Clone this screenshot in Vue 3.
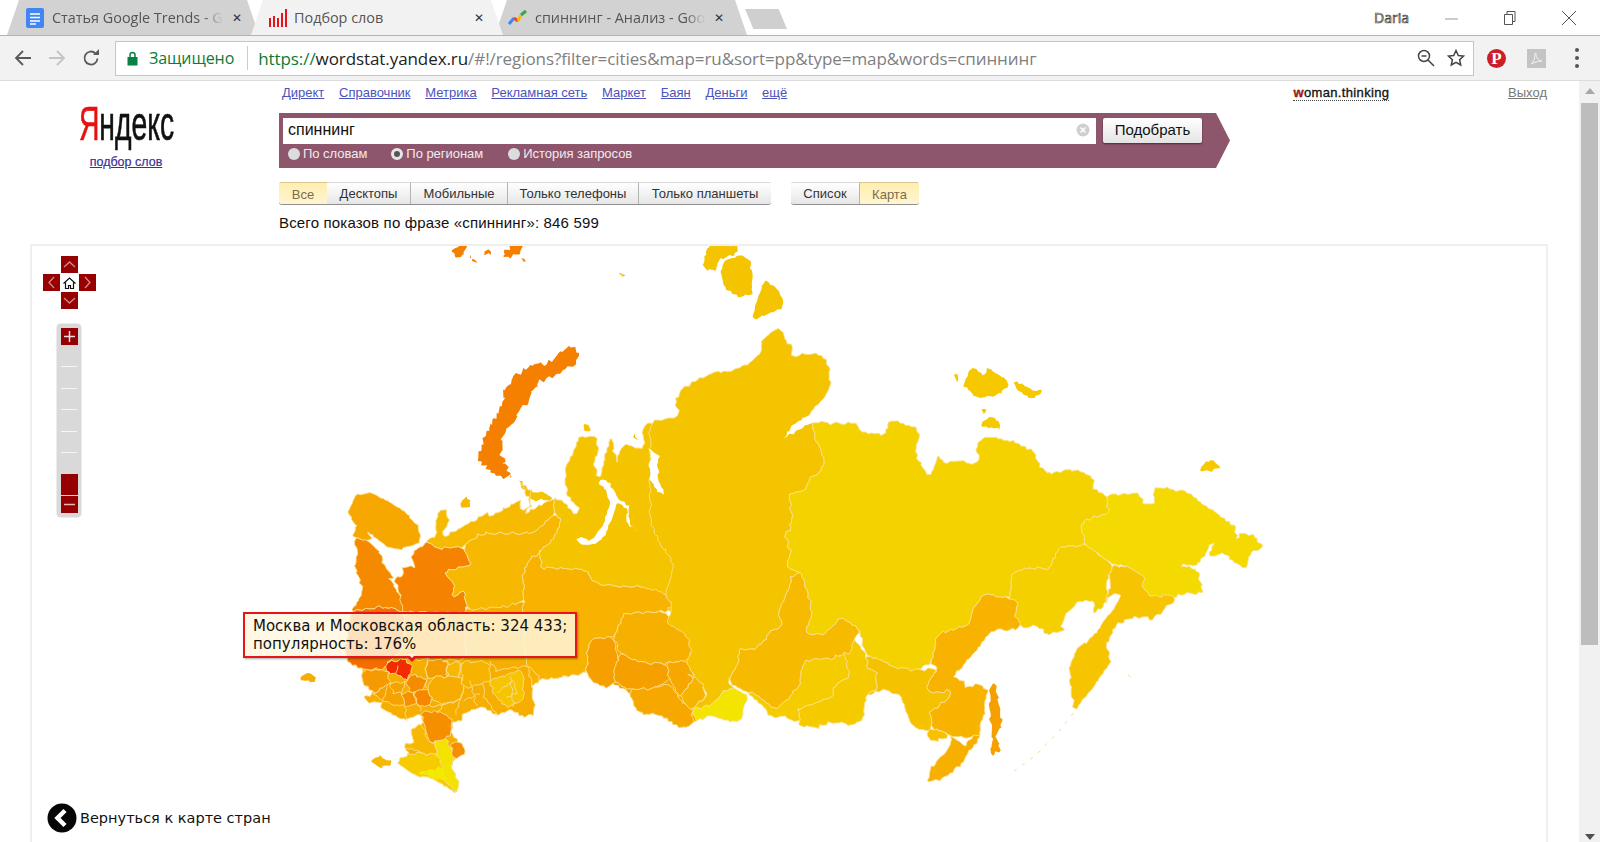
<script setup>
// frames: crop origin + scale, so outlines can be traced in crop coordinates
const frames = {
  eu: [230, 480, 1 / 3, 1 / 3],
  north: [420, 240, 1 / 3, 1 / 3],
  east: [650, 320, 1 / 2.41, 1 / 3],
}

const parse = (f, s) => {
  const [ox, oy, kx, ky] = frames[f]
  return s.trim().split(/\s+/).map((p) => {
    const [x, y] = p.split(',').map(Number)
    return [ox + x * kx, oy + y * ky]
  })
}

// take the sharp corners off, only a little so neighbours keep touching
const soften = (list, t = 0.12) => {
  const out = []
  list.forEach((a, i) => {
    const b = list[(i + 1) % list.length]
    out.push([a[0] * (1 - t) + b[0] * t, a[1] * (1 - t) + b[1] * t])
    out.push([a[0] * t + b[0] * (1 - t), a[1] * t + b[1] * (1 - t)])
  })
  return out
}

// the warp depends only on position, so neighbours wobble together
const warp = ([x, y], amp) => [
  x + amp * (Math.sin(0.9 * x + 0.4 * y) + 0.6 * Math.sin(0.31 * x - 0.83 * y) + 0.4 * Math.sin(1.9 * y + 0.7 * x)),
  y + amp * (Math.sin(0.7 * y - 0.5 * x + 1) + 0.6 * Math.sin(0.37 * y + 0.91 * x) + 0.4 * Math.sin(1.7 * x - 0.6 * y)),
]

const rough = (list, amp, closed = true) => {
  const out = []
  const last = closed ? list.length : list.length - 1
  for (let i = 0; i < last; i++) {
    const a = list[i]
    const b = list[(i + 1) % list.length]
    const n = Math.max(1, Math.round(Math.hypot(b[0] - a[0], b[1] - a[1]) / 3))
    for (let k = 0; k < n; k++) {
      out.push(warp([a[0] + ((b[0] - a[0]) * k) / n, a[1] + ((b[1] - a[1]) * k) / n], amp))
    }
  }
  if (!closed) out.push(warp(list[list.length - 1], amp))
  return out.map((p) => p[0].toFixed(1) + ',' + p[1].toFixed(1)).join(' ')
}

const raw = [
  // arctic islands
  ['north', '#f58000', '95,30 110,25 118,15 145,15 135,32 125,50 108,48', 0],
  ['north', '#f58000', '190,38 205,25 215,42 192,45', 0],
  ['north', '#f58000', '250,32 270,28 272,15 305,15 300,38 272,52 252,52', 0],
  ['north', '#f58000', '302,55 315,52 318,62 306,66', 0],
  ['north', '#f58000', '150,42 156,48 150,54', 0],
  ['north', '#f58000', '155,60 170,58 172,68 155,68', 0],
  ['north', '#f58000', '172,640 182,622 188,598 203,568 215,540 232,518 244,488 250,452 266,428 288,406 315,388 340,372 378,372 400,355 420,340 445,316 464,318 474,345 460,376 424,396 392,410 358,430 335,450 320,492 290,526 262,568 246,602 243,640 258,680 280,708 235,714 205,694 178,662', 0, 1.7],
  ['north', '#f7b800', '595,97 603,98 616,107 605,106', 0],
  ['north', '#f5c400', '865,15 950,15 955,40 905,55 893,75 890,92 855,90 850,55', 0],
  ['north', '#f5c400', '905,68 960,45 990,58 1000,120 992,165 950,170 918,148 905,120', 0],
  ['north', '#f5c400', '1040,120 1052,135 1068,145 1088,178 1085,205 1040,225 995,240 1015,180 1025,130', 0],
  ['north', '#f5c400', '490,575 495,555 510,558 512,572', 0],
  ['north', '#f5c400', '640,595 646,580 652,598', 0],
  ['north', '#f5c400', '296,720 305,722 325,750 325,757 305,745', 0],
  ['north', '#f5c400', '325,752 372,758 400,780 330,780', 0],
  // west siberian mass, bays are cut later
  ['eu', '#f5c400', '970,55 1000,60 1035,108 1045,85 1010,40 1005,-30 1030,-80 1050,-130 1100,-130 1105,-95 1090,-55 1105,0 1125,-60 1140,-130 1150,-110 1148,-85 1165,-55 1165,-75 1185,-105 1200,-100 1240,-95 1240,-170 1500,-200 1500,400 1300,395 1240,320 1170,320 1090,310 1070,270 1000,265 935,265 930,215 975,170 995,125 975,100', 1],
  // european russia base
  ['eu', '#f6ae00', '360,395 345,510 355,545 400,570 395,600 430,640 405,650 415,670 455,665 455,690 530,720 575,700 575,730 545,750 550,785 520,800 540,820 500,845 540,880 620,900 680,938 690,915 660,855 680,830 705,820 690,785 660,760 672,720 695,725 700,700 760,680 800,705 840,690 880,710 915,700 905,620 930,600 1070,580 1075,480 1150,470 1180,400 880,365 710,390', 1],
  // underlay for the south urals so no gaps show through
  ['eu', '#f6a800', '1075,480 1150,470 1180,400 1300,395 1375,460 1390,510 1420,600 1425,650 1390,730 1355,745 1295,705 1225,700 1195,630 1150,610 1125,625 1085,605 1070,580', 0],
  ['eu', '#f7b300', '880,365 880,290 890,245 930,215 935,265 1000,265 1070,270 1090,310 1170,320 1240,320 1310,345 1330,380 1300,395 1180,400 1150,470 1075,480 1070,580 930,600 905,620 880,500', 1],
  ['eu', '#f6a700', '355,100 365,65 385,42 430,40 480,65 530,100 565,140 570,175 555,195 500,210 465,195 430,165 415,155 428,182 370,175 380,140', 1],
  ['eu', '#f58a00', '370,175 415,180 450,215 465,260 490,290 480,300 510,345 520,395 460,380 360,395 400,340 375,265 385,220', 1],
  ['eu', '#f58200', '490,295 515,290 520,260 555,262 540,225 590,185 625,205 700,200 725,255 640,275 670,310 670,350 705,330 710,390 700,400 520,400 510,340', 1],
  ['eu', '#f6b800', '700,200 750,160 910,160 975,100 995,125 975,170 930,215 890,245 880,290 880,365 825,380 710,390 705,330 670,350 670,310 640,275 725,255', 1],
  ['eu', '#f6ba00', '625,95 645,90 660,130 635,155 640,170 690,145 770,100 780,110 870,60 875,95 905,75 870,5 905,40 900,75 885,100 970,55 975,100 910,160 750,160 700,200 625,205 590,185 615,165', 1],
  ['eu', '#f6b800', '690,70 705,50 720,60 715,80 695,85', 0],
  // urals & south siberia
  ['eu', '#f6b000', '1180,400 1300,395 1375,460 1390,510 1370,540 1310,550 1240,550 1170,520 1150,470', 1],
  ['eu', '#f69f00', '1075,480 1150,470 1165,540 1150,610 1125,625 1085,605 1070,580', 1],
  ['eu', '#f6a000', '1170,520 1240,550 1310,550 1320,600 1270,625 1195,630 1150,600 1160,550', 1],
  ['eu', '#f6a800', '1310,550 1370,540 1390,590 1350,655 1320,600', 1],
  ['eu', '#f6a800', '1195,630 1270,625 1320,610 1350,660 1385,685 1390,730 1355,745 1295,705 1225,700', 1],
  ['eu', '#f6b400', '1370,580 1420,600 1425,650 1385,690 1350,655 1390,590', 1],
  // central regions, the first two sit behind the tooltip
  ['eu', '#f56d00', '360,395 460,380 520,395 520,510 470,565 400,570 355,545 345,510', 1],
  ['eu', '#f59e00', '520,395 700,400 710,540 590,540 525,535 470,550 520,510', 1],
  ['eu', '#f59a00', '400,570 470,570 480,610 430,640 395,600', 1],
  ['eu', '#f59c00', '590,540 650,540 655,590 610,590 590,600', 1],
  ['eu', '#f6b800', '650,555 690,545 690,590 650,590', 1],
  ['eu', '#f6ac00', '655,590 690,590 700,625 690,660 640,670 605,660 590,625 610,590', 1],
  ['eu', '#f6b400', '690,545 780,545 780,600 760,610 700,625', 1],
  ['eu', '#f6c400', '780,600 880,570 880,660 830,680 790,640', 1],
  ['eu', '#f58c00', '530,605 550,580 590,600 580,630 540,635', 1],
  ['eu', '#f59000', '515,640 550,635 560,670 525,680', 1],
  ['eu', '#f58800', '555,635 590,625 605,660 590,680 560,670', 1],
  ['eu', '#f6a200', '480,610 530,605 515,640 525,680 455,665 430,640', 1],
  ['eu', '#f58f00', '575,695 640,695 670,720 660,760 640,785 600,790 585,740', 1],
  ['eu', '#f6b800', '545,750 575,730 600,790 615,780 620,825 575,820 520,800 550,785', 1],
  ['eu', '#f58f00', '660,790 695,785 705,820 680,835 668,825', 1],
  ['eu', '#f6cc00', '500,845 540,820 575,820 620,825 645,850 660,855 690,915 680,938 620,900 540,880', 1],
  ['eu', '#f4e200', '615,785 650,775 672,830 660,855 690,915 680,938 645,905 640,860 620,825', 1],
  ['eu', '#f4ea00', '560,880 600,868 640,860 650,905 620,895', 0],
  ['eu', '#f6b800', '425,840 450,825 470,840 490,845 465,860 445,862', 0],
  ['eu', '#f6ae00', '208,592 235,580 255,590 255,605 210,602', 0],
  ['eu', '#f22c00', '470,550 525,535 550,565 530,605 500,585 470,575', 1],
  // east
  ['east', '#f5c400', '0,305 40,298 72,285 60,240 75,210 110,180 160,155 190,155 240,130 265,100 270,60 305,25 325,40 325,65 345,85 340,112 370,100 410,105 430,135 435,200 415,240 380,285 395,305 395,350 415,400 420,440 385,480 375,510 335,525 342,580 340,630 325,640 340,700 330,745 365,755 340,770 335,800 310,880 320,920 290,935 255,990 215,985 215,1025 190,1085 205,1105 175,1115 150,1155 100,1170 135,1130 130,1100 90,1040 100,990 85,940 40,905 55,860 35,825 55,760 55,730 20,660 0,600', 1],
  ['east', '#f4d200', '395,305 440,310 500,310 505,335 565,345 575,300 640,320 650,350 640,400 665,460 680,465 695,405 710,430 745,420 775,435 795,420 785,375 810,350 860,360 925,390 930,420 960,460 1020,448 1065,470 1070,510 1100,525 1105,580 1045,600 1040,630 1050,675 990,680 965,745 905,745 875,760 865,835 805,822 775,870 770,915 695,940 675,1030 640,1050 600,1045 520,1005 505,930 460,890 420,945 378,940 390,870 365,755 330,745 340,700 325,640 340,630 342,580 335,525 375,510 385,480 420,440 415,400 395,350', 1],
  ['east', '#f4da00', '1100,525 1175,520 1190,550 1215,555 1215,500 1290,515 1340,560 1410,620 1415,660 1425,640 1455,645 1480,680 1445,700 1440,745 1400,720 1390,700 1345,710 1360,670 1350,670 1340,700 1320,735 1275,735 1320,750 1335,820 1300,820 1260,830 1205,830 1185,800 1195,775 1165,745 1115,730 1050,675 1040,630 1045,600 1105,580', 1],
  ['east', '#f5c800', '1325,455 1335,430 1355,420 1375,440 1360,452', 0],
  ['east', '#f5c800', '755,190 770,145 785,150 805,170 815,145 860,175 865,200 835,225 785,235', 0],
  ['east', '#f5c800', '880,185 920,210 945,212 935,230 910,235 880,205', 0],
  ['east', '#f5c800', '800,270 808,265 805,285', 0],
  ['east', '#f5c800', '795,315 820,290 840,305 842,330', 0],
  ['east', '#f5c800', '735,165 741,165 738,192', 0],
  ['east', '#f5d000', '875,760 905,745 965,745 990,680 1050,675 1115,735 1100,800 1100,850 1070,880 1070,840 1030,845 1005,880 990,925 1000,930 950,945 950,925 920,918 895,925 880,885 885,840 865,835', 1],
  ['east', '#f6c400', '1115,735 1165,745 1195,775 1185,800 1205,830 1260,825 1265,840 1205,905 1200,890 1155,895 1125,915 1100,975 1110,1025 1090,1065 1050,1130 1022,1175 1010,1050 1030,985 1060,960 1110,880 1135,820 1110,825 1100,850', 1],
  ['east', '#f7b300', '695,940 770,915 775,870 805,822 865,835 885,840 880,885 895,915 880,930 825,930 780,1000 730,1070 760,1085 760,1105 795,1090 815,1110 805,1170 795,1245 775,1250 760,1255 725,1245 680,1225 675,1175 715,1140 725,1110 680,1120 665,1100 695,1045 675,1030', 1],
  ['east', '#f7b000', '725,1245 720,1280 690,1330 675,1340 670,1385 700,1380 740,1345 780,1280 795,1245 775,1250 760,1280', 1],
  ['east', '#f7c000', '668,1230 680,1225 722,1245 695,1262 672,1262', 1],
  ['east', '#f5c200', '520,1005 600,1045 640,1050 695,1045 665,1100 680,1120 725,1110 715,1140 675,1175 680,1225 668,1235 630,1215 605,1125 565,1108 525,1125 545,1105 545,1055 525,1040', 1],
  ['east', '#f5cb00', '490,960 510,985 520,1005 525,1040 545,1055 545,1105 525,1125 510,1200 490,1215 435,1205 400,1225 360,1215 360,1165 440,1130 440,1100 480,1070 462,1000', 1],
  ['east', '#f5cc00', '235,1120 250,1115 305,1170 360,1100 370,1020 440,1015 470,1000 480,1070 440,1100 440,1130 360,1165 360,1205 320,1190 285,1190 280,1165', 1],
  ['east', '#f6ba00', '340,770 365,755 390,870 378,940 420,945 460,890 505,930 490,960 480,1000 465,1000 440,1015 370,1020 360,1100 305,1170 250,1115 235,1120 190,1085 215,1025 215,985 255,990 290,935 320,920 310,880 335,800', 1],
  ['east', '#f4e500', '100,1170 150,1155 175,1115 205,1105 235,1125 220,1205 175,1200 150,1185 110,1205', 1],
  ['east', '#f5a000', '830,1085 835,1110 850,1220 835,1245 845,1295 822,1305 825,1250 818,1160 820,1110', 0],
  ['east', '#f6c860', '1150,1058 1160,1072 1155,1072', 0],
]

// white bays and gulfs over the land
const bays = [
  ['eu', '1105,0 1140,55 1125,130 1085,180 1040,172 1042,188 1085,196 1125,170 1150,110 1160,65 1195,90 1190,130 1226,158 1195,125 1198,85 1165,52 1130,0'],
  ['north', '695,640 718,650 705,720 735,762 725,765 695,725 690,690'],
  ['east', '0,380 18,415 22,490 36,522 22,512 5,490 0,470'],
  ['east', '320,355 355,330 395,305 425,295 425,270 410,250 405,280 380,285 340,320'],
  ['east', '415,250 430,248 432,272 412,275'],
]

// inner borders of the small central regions
const borders = [
  '590,540 590,625', '650,540 655,590', '690,545 690,590', '760,610 765,650 800,705',
  '700,625 680,700', '640,670 620,700', '560,670 575,695', '455,665 470,620',
  '480,610 490,640 515,640', '525,680 530,720', '720,600 740,680', '840,590 850,680',
  '600,680 660,670 690,660', '750,640 700,660', '800,640 850,600 860,640 830,650',
  '500,585 505,560', '780,545 800,570 880,560', '930,600 905,560 880,560',
]

const land = raw.map(([f, fill, s, line, amp]) => ({
  fill,
  points: rough(soften(parse(f, s)), amp || 0.9),
  line: !!line,
}))
const gulfs = bays.map(([f, s]) => rough(soften(parse(f, s)), 0.9))
const seams = borders.map((s) => rough(parse('eu', s), 0.9, false))
const kurils = rough(parse('east', '1020,1180 985,1235 930,1305 870,1360'), 0, false)

const services = ['Директ', 'Справочник', 'Метрика', 'Рекламная сеть', 'Маркет', 'Баян', 'Деньги', 'ещё']
const devices = [
  { name: 'Все', width: 48, on: true },
  { name: 'Десктопы', width: 84 },
  { name: 'Мобильные', width: 97 },
  { name: 'Только телефоны', width: 131 },
  { name: 'Только планшеты', width: 132 },
]
const ticks = [0, 1, 2, 3, 4]
</script>

<template>
  <div class="screen">
    <header class="chrome">
      <div class="tabstrip">
        <div class="tab tab--first">
          <svg class="fav" width="20" height="20" viewBox="0 0 20 20">
            <rect x="1" y="0" width="18" height="20" rx="2" fill="#4285f4" />
            <path d="M5 6h10M5 9.500h10M5 13h10M5 16h6" stroke="#fff" stroke-width="1.600" />
          </svg>
          <span class="tab__title tab__title--fade">Статья Google Trends - G</span>
          <span class="tab__x">✕</span>
        </div>
        <div class="tab tab--on">
          <svg class="fav" width="20" height="18" viewBox="0 0 20 18">
            <path d="M2 9h2v9H2zM6 7h2v11H6zM10 9h2v9h-2zM14 4h2v14h-2zM18 0h2v18h-2z" fill="#e8141c" />
          </svg>
          <span class="tab__title">Подбор слов</span>
          <span class="tab__x">✕</span>
        </div>
        <div class="tab tab--third">
          <svg class="fav" width="20" height="18" viewBox="0 0 20 18">
            <path d="M1 15l5-6" stroke="#4285f4" stroke-width="3" />
            <path d="M6 9l4 3" stroke="#ea4335" stroke-width="3" />
            <path d="M10 12l3-6" stroke="#fbbc05" stroke-width="3" />
            <path d="M13 6l5-4" stroke="#34a853" stroke-width="3" />
          </svg>
          <span class="tab__title tab__title--fade">спиннинг - Анализ - Goo</span>
          <span class="tab__x">✕</span>
        </div>
        <div class="newtab"></div>
        <div class="winbox">
          <span class="winbox__user">Daria</span>
          <svg width="14" height="14" viewBox="0 0 14 14" class="winbox__btn"><path d="M0 8h13" stroke="#9a9a9a" /></svg>
          <svg width="14" height="16" viewBox="0 0 14 16" class="winbox__btn"><path d="M1.500 4.500h8v10h-8zM4 4.500v-3h8v10h-2.500" fill="none" stroke="#555" /></svg>
          <svg width="16" height="16" viewBox="0 0 16 16" class="winbox__btn"><path d="M1 1l14 14M15 1L1 15" stroke="#555" /></svg>
        </div>
      </div>
      <div class="toolbar">
        <svg width="18" height="18" viewBox="0 0 18 18" class="nav"><path d="M17 9H2M9 2L2 9l7 7" fill="none" stroke="#5a5a5a" stroke-width="1.800" /></svg>
        <svg width="18" height="18" viewBox="0 0 18 18" class="nav"><path d="M1 9h15M9 2l7 7-7 7" fill="none" stroke="#c4c4c4" stroke-width="1.800" /></svg>
        <svg width="18" height="18" viewBox="0 0 18 18" class="nav"><path d="M15.500 9.500A6.500 6.500 0 1 1 13.500 4.300" fill="none" stroke="#5a5a5a" stroke-width="1.800" /><path d="M11 6h6V0z" fill="#5a5a5a" /></svg>
        <div class="omnibox">
          <svg width="11" height="15" viewBox="0 0 11 15"><path d="M3 6V4a2.500 2.500 0 0 1 5 0v2" fill="none" stroke="#0b8043" stroke-width="1.500" /><rect x="0.500" y="6" width="10" height="8.500" fill="#0b8043" /></svg>
          <span class="omnibox__secure">Защищено</span>
          <span class="omnibox__sep"></span>
          <span class="omnibox__url"><span class="u-green">https://</span><span class="u-host">wordstat.yandex.ru</span>/#!/regions?filter=cities&amp;map=ru&amp;sort=pp&amp;type=map&amp;words=спиннинг</span>
          <svg width="18" height="18" viewBox="0 0 18 18" class="omnibox__zoom"><circle cx="7" cy="7" r="5.500" fill="none" stroke="#444" stroke-width="1.500" /><path d="M4.500 7h5M11 11l6 6" stroke="#444" stroke-width="1.500" /></svg>
          <svg width="18" height="18" viewBox="0 0 18 18"><path d="M9 1.500l2.300 5 5.200.6-3.900 3.600 1.100 5.300L9 13.300 4.300 16l1.100-5.300L1.500 7.100l5.200-.6z" fill="none" stroke="#444" stroke-width="1.500" /></svg>
        </div>
        <div class="pin">P</div>
        <div class="pdf">
          <svg width="13" height="13" viewBox="0 0 13 13"><path d="M1 12c3-2 4-6 4-10 0-2 1-1 1 0 0 4 3 7 6 7-3 0-7 1-11 3z" fill="none" stroke="#f2f2f2" /></svg>
        </div>
        <div class="dots"><i></i><i></i><i></i></div>
      </div>
    </header>

    <div class="viewport">
      <main class="page">
        <div class="top">
          <div class="brand">
            <div class="brand__logo"><span class="brand__ya">Я</span>ндекс</div>
            <a class="brand__sub">подбор слов</a>
          </div>
          <div class="panel">
            <nav class="services">
              <a v-for="s in services" :key="s" class="services__link">{{ s }}</a>
              <a class="user"><b class="user__w">w</b>oman.thinking</a>
              <a class="logout">Выход</a>
            </nav>
            <div class="search">
              <div class="search__row">
                <div class="search__input">
                  <span>спиннинг</span>
                  <svg width="14" height="14" viewBox="0 0 14 14"><circle cx="7" cy="7" r="6.500" fill="#cfcfcf" /><path d="M4.500 4.500l5 5M9.500 4.500l-5 5" stroke="#fff" stroke-width="1.600" /></svg>
                </div>
                <button class="search__btn">Подобрать</button>
              </div>
              <div class="search__modes">
                <label class="mode mode--a"><i class="radio"></i>По словам</label>
                <label class="mode mode--b"><i class="radio radio--on"></i>По регионам</label>
                <label class="mode"><i class="radio"></i>История запросов</label>
              </div>
            </div>
            <div class="filters">
              <div class="seg">
                <span v-for="d in devices" :key="d.name" class="seg__item" :class="{ 'seg__item--on': d.on }" :style="{ width: d.width + 'px' }">{{ d.name }}</span>
              </div>
              <div class="seg">
                <span class="seg__item seg__item--list">Список</span>
                <span class="seg__item seg__item--on seg__item--card">Карта</span>
              </div>
            </div>
            <p class="total">Всего показов по фразе «спиннинг»: 846 599</p>
          </div>
        </div>

        <section class="map">
          <svg class="map__svg" width="1518" height="598" viewBox="30 244 1518 598">
            <polygon
              v-for="(r, i) in land"
              :key="i"
              :points="r.points"
              :fill="r.fill"
              :stroke="r.line ? '#fbdf8e' : 'none'"
              stroke-width="0.9"
              stroke-linejoin="round"
            />
            <polyline v-for="(s, i) in seams" :key="'s' + i" :points="s" fill="none" stroke="#fbdf8e" stroke-width="0.9" />
            <polygon v-for="(g, i) in gulfs" :key="'g' + i" :points="g" fill="#fff" />
            <polyline :points="kurils" fill="none" stroke="#f8c878" stroke-width="0.8" stroke-dasharray="3 7" />
          </svg>

          <div class="pad">
            <div class="pad__row"><span class="pad__btn"><svg width="17" height="17" viewBox="0 0 17 17"><path d="M3 11l5.500-5L14 11" class="chev" /></svg></span></div>
            <div class="pad__row">
              <span class="pad__btn"><svg width="17" height="17" viewBox="0 0 17 17"><path d="M11 3L6 8.500l5 5.500" class="chev" /></svg></span>
              <span class="pad__home"><svg width="13" height="12" viewBox="0 0 13 12"><path d="M0.500 6.500L6.500 1l6 5.500M2.500 5.500v6h3v-3h2v3h3v-6" fill="none" stroke="#111" stroke-width="1.200" /></svg></span>
              <span class="pad__btn"><svg width="17" height="17" viewBox="0 0 17 17"><path d="M6 3l5 5.500L6 14" class="chev" /></svg></span>
            </div>
            <div class="pad__row"><span class="pad__btn"><svg width="17" height="17" viewBox="0 0 17 17"><path d="M3 6l5.500 5L14 6" class="chev" /></svg></span></div>
          </div>

          <div class="zoombar">
            <span class="zoombar__btn"><svg width="11" height="11" viewBox="0 0 11 11"><path d="M5.500 0v11M0 5.500h11" stroke="#f4dede" stroke-width="1.500" /></svg></span>
            <div class="zoombar__ticks"><i v-for="t in ticks" :key="t"></i></div>
            <span class="zoombar__thumb"></span>
            <span class="zoombar__btn zoombar__btn--minus"><svg width="11" height="11" viewBox="0 0 11 11"><path d="M0 5.500h11" stroke="#e8b8b8" stroke-width="1.500" /></svg></span>
          </div>

          <div class="tip">
            Москва и Московская область: 324 433;<br />популярность: 176%
            <span class="tip__tail"></span>
          </div>

          <a class="back">
            <svg width="30" height="30" viewBox="0 0 30 30"><circle cx="15" cy="15" r="14.500" fill="#060606" /><path d="M18 7.500L10.500 15l7.500 7.500" fill="none" stroke="#fff" stroke-width="4.500" /></svg>
            <span>Вернуться к карте стран</span>
          </a>
        </section>
      </main>
      <aside class="scroll">
        <span class="scroll__up"></span>
        <div class="scroll__thumb"></div>
        <span class="scroll__down"></span>
      </aside>
    </div>
  </div>
</template>

<style>
html, body { margin: 0; background: #fff; overflow: hidden; }
</style>

<style scoped>
.screen {
  width: 1600px;
  height: 842px;
  display: flex;
  flex-direction: column;
  overflow: hidden;
  font-family: 'Liberation Sans', Arial, sans-serif;
  background: #fff;
}

.chrome { height: 81px; flex: none; }

.tabstrip {
  height: 36px;
  display: flex;
  align-items: flex-end;
  border-bottom: 1px solid #b4b4b4;
  box-sizing: border-box;
  background: #fff;
}

.tab {
  position: relative;
  height: 35px;
  display: flex;
  align-items: center;
  box-sizing: border-box;
  background: #d2d2d2;
  clip-path: polygon(0 100%, 12px 0, calc(100% - 12px) 0, 100% 100%);
  font-family: 'Open Sans', sans-serif;
  font-size: 14.400px;
  color: #555;
}

.tab--first { width: 252px; margin-left: 7px; padding: 0 17px 0 18px; }
.tab--on { width: 252px; margin-left: -8px; padding: 0 19px 0 16px; background: #f2f2f2; z-index: 1; }
.tab--third { width: 252px; margin-left: -8px; padding: 0 23px 0 13px; }

.fav { flex: none; margin-right: 7px; }

.tab__title {
  flex: 1;
  white-space: nowrap;
}

.tab__title--fade {
  -webkit-mask-image: linear-gradient(90deg, #000 88%, rgba(0, 0, 0, 0.1) 98%);
  mask-image: linear-gradient(90deg, #000 88%, rgba(0, 0, 0, 0.1) 98%);
}

.tab__x { flex: none; margin-left: 8px; font-size: 12px; color: #333; }

.newtab {
  width: 42px;
  height: 20px;
  margin: 0 0 6px -2px;
  background: #cfcfcf;
  clip-path: polygon(0 0, 80% 0, 100% 100%, 20% 100%);
}

.winbox {
  margin-left: auto;
  height: 35px;
  display: flex;
  align-items: center;
}

.winbox__user {
  font-family: 'Open Sans', sans-serif;
  font-size: 14px;
  font-weight: 400;
  color: #fff;
  -webkit-text-stroke: 0.7px #444;
  margin-right: 36px;
}

.winbox__btn { margin-right: 44px; }
.winbox__btn:last-child { margin-right: 23px; }

.toolbar {
  height: 45px;
  display: flex;
  align-items: center;
  box-sizing: border-box;
  padding-left: 14px;
  background: #f2f2f2;
  border-bottom: 1px solid #dcdcdc;
}

.nav { margin-right: 16px; flex: none; }
.nav:nth-child(3) { margin-right: 15px; }

.omnibox {
  width: 1359px;
  height: 35px;
  box-sizing: border-box;
  display: flex;
  align-items: center;
  padding: 0 8px 0 11px;
  background: #fff;
  border: 1px solid #c6c6c6;
  font-family: 'Open Sans', sans-serif;
  font-size: 17px;
  letter-spacing: -0.08px;
  color: #808080;
  white-space: nowrap;
}

.omnibox__secure { margin-left: 11px; color: #0b7b36; font-size: 16px; }
.omnibox__sep { width: 1px; height: 24px; background: #ccc; margin: 0 10px 0 13px; }
.omnibox__url { flex: 1; }
.omnibox__zoom { margin-right: 12px; }
.u-green { color: #0b7b36; }
.u-host { color: #222; }

.pin {
  width: 19px;
  height: 19px;
  margin-left: 13px;
  border-radius: 50%;
  background: #cb1f27;
  color: #fff;
  font-family: 'Liberation Serif', serif;
  font-size: 17px;
  font-weight: 700;
  line-height: 19px;
  text-align: center;
}

.pdf {
  width: 19px;
  height: 19px;
  margin-left: 21px;
  display: flex;
  align-items: center;
  justify-content: center;
  background: #c4c4c4;
}

.dots {
  margin-left: 29px;
  display: flex;
  flex-direction: column;
  gap: 4px;
}

.dots i { width: 4px; height: 4px; border-radius: 50%; background: #555; display: block; }

.viewport { flex: 1; display: flex; min-height: 0; }

.page { width: 1579px; flex: none; overflow: hidden; }

.top { height: 163px; display: flex; }

.brand {
  width: 279px;
  flex: none;
  box-sizing: border-box;
  padding: 15px 27px 0 0;
  display: flex;
  flex-direction: column;
  align-items: center;
}

.brand__logo {
  width: 163px;
  font-size: 48px;
  line-height: 56px;
  text-align: center;
  color: #111;
  white-space: nowrap;
  transform: scaleX(0.59);
  -webkit-text-stroke: 0.6px currentColor;
}

.brand__ya { color: #e8110f; }

.brand__sub {
  margin-top: 3px;
  font-size: 12.500px;
  color: #3c2f96;
  text-decoration: underline;
  -webkit-text-stroke: 0.2px currentColor;
}

.panel { width: 1268px; }

.services {
  height: 32px;
  box-sizing: border-box;
  padding: 4px 0 0 3px;
  display: flex;
  gap: 14.700px;
  font-size: 13px;
  line-height: 16px;
}

.services__link { color: #4b53bd; text-decoration: underline; }

.user {
  margin-left: auto;
  color: #111;
  font-weight: 400;
  letter-spacing: 0.35px;
  -webkit-text-stroke: 0.3px #111;
  border-bottom: 1px dotted #444;
  height: 15px;
}

.user__w { color: #e8110f; }

.logout { margin-left: 104px; color: #777; text-decoration: underline; }

.search {
  width: 951px;
  height: 55px;
  box-sizing: border-box;
  padding: 5px 4px 0;
  background: #8e566c;
  clip-path: polygon(0 0, 937px 0, 100% 50%, 937px 100%, 0 100%);
}

.search__row { display: flex; gap: 7px; }

.search__input {
  width: 813px;
  height: 26px;
  box-sizing: border-box;
  padding: 0 6px 2px 5px;
  display: flex;
  align-items: center;
  justify-content: space-between;
  background: #fff;
  font-size: 16px;
  color: #111;
}

.search__btn {
  width: 99px;
  height: 25px;
  padding: 0 0 2px;
  border: 0;
  border-radius: 2px;
  background: linear-gradient(#fff, #e4e4e4);
  box-shadow: 0 1px 2px rgba(0, 0, 0, 0.5);
  font-family: inherit;
  font-size: 15px;
  color: #111;
}

.search__modes {
  margin-top: 2px;
  padding-left: 5px;
  display: flex;
  font-size: 13px;
  letter-spacing: -0.03px;
  line-height: 16px;
  color: #f2eaee;
}

.mode { display: flex; align-items: center; gap: 3px; margin-right: 25px; }
.mode--a { margin-right: 24px; }

.radio {
  width: 12px;
  height: 12px;
  border-radius: 50%;
  background: #dcdcdc;
  box-sizing: border-box;
  display: block;
}

.radio--on { border: 3px solid #e6e6e6; background: #555; }

.filters { margin-top: 14px; display: flex; gap: 20px; }

.seg {
  display: flex;
  height: 22px;
  border-radius: 3px;
  overflow: hidden;
  box-shadow: inset 0 0 0 1px #c8c8c8, 0 1px 0 #8f8f8f;
}

.seg__item {
  box-sizing: border-box;
  display: flex;
  align-items: center;
  justify-content: center;
  font-size: 13px;
  color: #333;
  background: linear-gradient(#fff, #e6e6e6);
  border-right: 1px solid #b4b4b4;
  border-top: 1px solid #d8d8d8;
}

.seg__item:last-child { border-right: 0; }
.seg__item--list { width: 69px; }
.seg__item--card { width: 59px; }

.seg__item--on {
  background: linear-gradient(#ffeeb0, #fff5d0);
  color: #7a6c50;
  border-right: 0;
  padding-top: 2px;
  border-top: 1px solid #d8c890;
}

.total {
  margin: 9px 0 0;
  font-size: 15px;
  letter-spacing: 0.17px;
  line-height: 20px;
  color: #111;
}

.map {
  position: relative;
  width: 1518px;
  height: 598px;
  margin-left: 30px;
  box-sizing: border-box;
  border: 2px solid #efefef;
  border-bottom: 0;
  overflow: hidden;
}

.map__svg { position: absolute; left: -2px; top: -2px; }

.pad { position: absolute; left: 11px; top: 10px; display: flex; flex-direction: column; gap: 1px; }
.pad__row { display: flex; justify-content: center; gap: 1px; }

.pad__btn {
  width: 17px;
  height: 17px;
  background: #960000;
  display: block;
}

.pad__btn svg { display: block; }
.pad__home { width: 17px; height: 17px; display: flex; align-items: center; justify-content: center; }

.chev { fill: none; stroke: #d48a8a; stroke-width: 1.300; }

.zoombar {
  position: absolute;
  left: 25px;
  top: 78px;
  width: 24px;
  height: 193px;
  box-sizing: border-box;
  padding: 4px 4px 4px;
  display: flex;
  flex-direction: column;
  background: #d9d9d9;
  border-radius: 4px;
  box-shadow: 0 0 0 1px #ececec;
}

.zoombar__btn {
  width: 17px;
  height: 17px;
  flex: none;
  background: #960000;
  display: flex;
  align-items: center;
  justify-content: center;
}

.zoombar__btn--minus { margin-top: 1px; }

.zoombar__ticks {
  flex: none;
  height: 129px;
  box-sizing: border-box;
  padding-top: 21px;
  display: flex;
  flex-direction: column;
  gap: 20.500px;
}

.zoombar__ticks i { display: block; width: 16px; height: 1px; background: #f6f6f6; }

.zoombar__thumb { width: 17px; height: 21px; flex: none; background: #960000; }

.tip {
  position: absolute;
  left: 211px;
  top: 366px;
  width: 334px;
  height: 46px;
  box-sizing: border-box;
  padding: 3px 0 0 8px;
  background: rgba(255, 247, 224, 0.84);
  border: 2px solid #e8141c;
  box-shadow: 1px 1px 2px rgba(0, 0, 0, 0.35);
  font-family: 'DejaVu Sans', Verdana, sans-serif;
  font-size: 15px;
  line-height: 18px;
  color: #111;
  white-space: nowrap;
}

.tip__tail {
  position: absolute;
  left: 161px;
  top: 100%;
  width: 0;
  height: 0;
  border: 6px solid transparent;
  border-top: 6px solid #e8141c;
  border-bottom: 0;
}

.tip__tail::after {
  content: '';
  position: absolute;
  left: -4px;
  top: -8px;
  width: 0;
  height: 0;
  border: 4px solid transparent;
  border-top: 4px solid #fff3d8;
  border-bottom: 0;
}

.back {
  position: absolute;
  left: 15px;
  top: 557px;
  display: flex;
  align-items: center;
  gap: 3px;
  font-family: 'DejaVu Sans', Verdana, sans-serif;
  font-size: 14.500px;
  color: #111;
}

.scroll {
  width: 21px;
  flex: none;
  position: relative;
  background: #f1f1f1;
  display: flex;
  flex-direction: column;
  align-items: center;
}

.scroll__up {
  margin-top: 7px;
  width: 0;
  height: 0;
  border: 5px solid transparent;
  border-bottom: 6px solid #a8a8a8;
  border-top: 0;
}

.scroll__thumb { margin-top: 9px; width: 17px; height: 542px; background: #bdbdbd; }

.scroll__down {
  margin-top: auto;
  margin-bottom: 2px;
  width: 0;
  height: 0;
  border: 5px solid transparent;
  border-top: 6px solid #505050;
  border-bottom: 0;
}
</style>
